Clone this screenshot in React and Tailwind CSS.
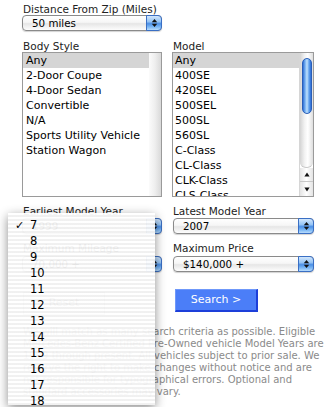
import React from "react";

const Arrows = () => (
  <svg width="7" height="10" viewBox="0 0 7 10">
    <polygon points="3.5,1 6.2,4.2 0.8,4.2" fill="#111" />
    <polygon points="0.8,5.8 6.2,5.8 3.5,9" fill="#111" />
  </svg>
);

const Select = ({ value, className }) => (
  <div
    className={
      "relative h-[16px] rounded-[4px] border border-[#8a8a8a] bg-[linear-gradient(to_bottom,#ffffff_0%,#f6f6f6_45%,#e6e6e6_55%,#fdfdfd_100%)] shadow-[0_1px_1px_rgba(0,0,0,0.18)] flex items-center " +
      className
    }
  >
    <span className="pl-[9px] text-[10.3px] leading-none text-black whitespace-nowrap">{value}</span>
    <div className="absolute right-[-1px] top-[-1px] bottom-[-1px] w-[16px] rounded-r-[4px] border border-[#3a6fc4] bg-[linear-gradient(to_bottom,#d3e7fc_0%,#95c4f5_40%,#4b8fe6_55%,#7fbaf5_80%,#b9dcfd_100%)] flex items-center justify-center">
      <Arrows />
    </div>
  </div>
);

const Label = ({ children }) => (
  <div className="pl-[1px] text-[10.5px] leading-[12px] text-[#222] whitespace-nowrap">{children}</div>
);

const Row = ({ children, selected }) => (
  <div
    className={
      "h-[15px] leading-[15px] pl-[3px] text-[11px] text-black whitespace-nowrap " +
      (selected ? "bg-[#d5d5d5]" : "")
    }
  >
    {children}
  </div>
);

const bodyStyles = ["Any", "2-Door Coupe", "4-Door Sedan", "Convertible", "N/A", "Sports Utility Vehicle", "Station Wagon"];
const models = ["Any", "400SE", "420SEL", "500SEL", "500SL", "560SL", "C-Class", "CL-Class", "CLK-Class", "CLS-Class"];
const years = ["7", "8", "9", "10", "11", "12", "13", "14", "15", "16", "17", "18"];

export default function App() {
  return (
    <div className="w-[330px] h-[407px] bg-white relative overflow-hidden font-['DejaVu_Sans',sans-serif] text-black">
      <div className="pl-[22px] pt-[3px]">
        <Label>Distance From Zip (Miles)</Label>
        <Select value="50 miles" className="w-[140px]" />

        <div className="mt-[9px] grid grid-cols-[140px_142px] gap-x-[10px]">
          <div>
            <Label>Body Style</Label>
            <div className="h-[145px] border border-[#9a9a9a] bg-white flex overflow-hidden">
              <div className="flex-1">
                {bodyStyles.map((b, i) => (
                  <Row key={b} selected={i === 0}>{b}</Row>
                ))}
              </div>
              <div className="w-[12px] bg-[linear-gradient(to_right,#fbfbfb,#eeeeee_50%,#d9d9d9)]" />
            </div>
          </div>
          <div>
            <Label>Model</Label>
            <div className="h-[145px] border border-[#9a9a9a] bg-white flex overflow-hidden">
              <div className="flex-1 overflow-hidden">
                {models.map((m, i) => (
                  <div
                    key={m}
                    className={
                      "h-[15px] leading-[15px] pl-[2px] text-[11px] text-black whitespace-nowrap " +
                      (i === 0 ? "bg-[#d5d5d5]" : "")
                    }
                  >
                    {m}
                  </div>
                ))}
              </div>
              <div className="w-[14px] flex flex-col border-l border-[#d6d6d6]">
                <div className="flex-1 bg-[linear-gradient(to_right,#d4d4d4,#f2f2f2_35%,#ffffff_60%,#dedede)] rounded-b-[6px] border-b border-[#c8c8c8] pt-[5px] flex justify-center">
                  <div className="w-[10px] h-[56px] rounded-full border border-[#2a5fb8] bg-[linear-gradient(to_right,#2e6fd6,#8ec3f8_35%,#c2e1fc_50%,#6aa8ef_72%,#2c6cd4)]" />
                </div>
                <div className="h-[14px] flex items-center justify-center border-b border-[#c8c8c8] bg-[linear-gradient(to_right,#e4e4e4,#ffffff_50%,#e4e4e4)]">
                  <svg width="6" height="5" viewBox="0 0 6 5">
                    <polygon points="3,0.5 5.6,4.5 0.4,4.5" fill="#111" />
                  </svg>
                </div>
                <div className="h-[14px] flex items-center justify-center bg-[linear-gradient(to_right,#e4e4e4,#ffffff_50%,#e4e4e4)]">
                  <svg width="6" height="5" viewBox="0 0 6 5">
                    <polygon points="0.4,0.5 5.6,0.5 3,4.5" fill="#111" />
                  </svg>
                </div>
              </div>
            </div>
          </div>

          <div className="mt-[8px]">
            <Label>Earliest Model Year</Label>
            <Select value="1999" className="w-[140px] mt-[1px]" />
          </div>
          <div className="mt-[8px]">
            <Label>Latest Model Year</Label>
            <Select value="2007" className="w-[141px] mt-[1px] ml-[1px]" />
          </div>

          <div className="mt-[8px]">
            <Label>Maximum Mileage</Label>
            <Select value="70,000 +" className="w-[140px] mt-[2px]" />
          </div>
          <div className="mt-[8px]">
            <Label>Maximum Price</Label>
            <Select value="$140,000 +" className="w-[141px] mt-[2px] ml-[1px]" />
          </div>

          <div className="mt-[17px]">
            <button className="ml-[1px] w-[82px] h-[23px] border border-[#c4c4c4] bg-[#fafafa] text-[11px] text-[#666] font-['DejaVu_Sans',sans-serif]">
              Reset
            </button>
          </div>
          <div className="mt-[17px]">
            <button className="ml-[3px] w-[83px] h-[23px] bg-[#4b7ef8] border-t border-l border-t-[#6f98fa] border-l-[#6f98fa] border-r-2 border-b-2 border-r-[#1d3fd9] border-b-[#1d3fd9] text-[11px] text-white font-['DejaVu_Sans',sans-serif] flex items-center justify-center">
              Search &gt;
            </button>
          </div>
        </div>

        <p className="mt-[11px] pl-[1px] text-[10px] leading-[12px] text-[#8a8a8a] whitespace-nowrap">
          We will match as many search criteria as possible. Eligible
          <br />
          Mercedes-Benz Certified Pre-Owned vehicle Model Years are
          <br />
          1999 through present. All vehicles subject to prior sale. We
          <br />
          reserve the right to make changes without notice and are
          <br />
          not responsible for typographical errors. Optional and
          <br />
          standard accessories may vary.
        </p>
      </div>
      <div className="mt-[9px] h-[1px] bg-[#cfcfcf]" />

      {/* popup menu */}
      <div className="absolute left-[8px] top-[213px] w-[147px] h-[192px] pt-[5px] shadow-[0_3px_10px_rgba(0,0,0,0.45)] bg-[repeating-linear-gradient(to_bottom,rgba(255,255,255,0.95)_0px,rgba(255,255,255,0.95)_2px,rgba(240,240,240,0.95)_2px,rgba(240,240,240,0.95)_4px)]">
        {years.map((y, i) => (
          <div key={y} className="h-[16px] flex items-center text-[11.5px] text-black font-['DejaVu_Sans',sans-serif]">
            <span className="w-[22px] pl-[7px] text-[11px]">{i === 0 ? "✓" : ""}</span>
            <span>{y}</span>
          </div>
        ))}
      </div>
    </div>
  );
}
